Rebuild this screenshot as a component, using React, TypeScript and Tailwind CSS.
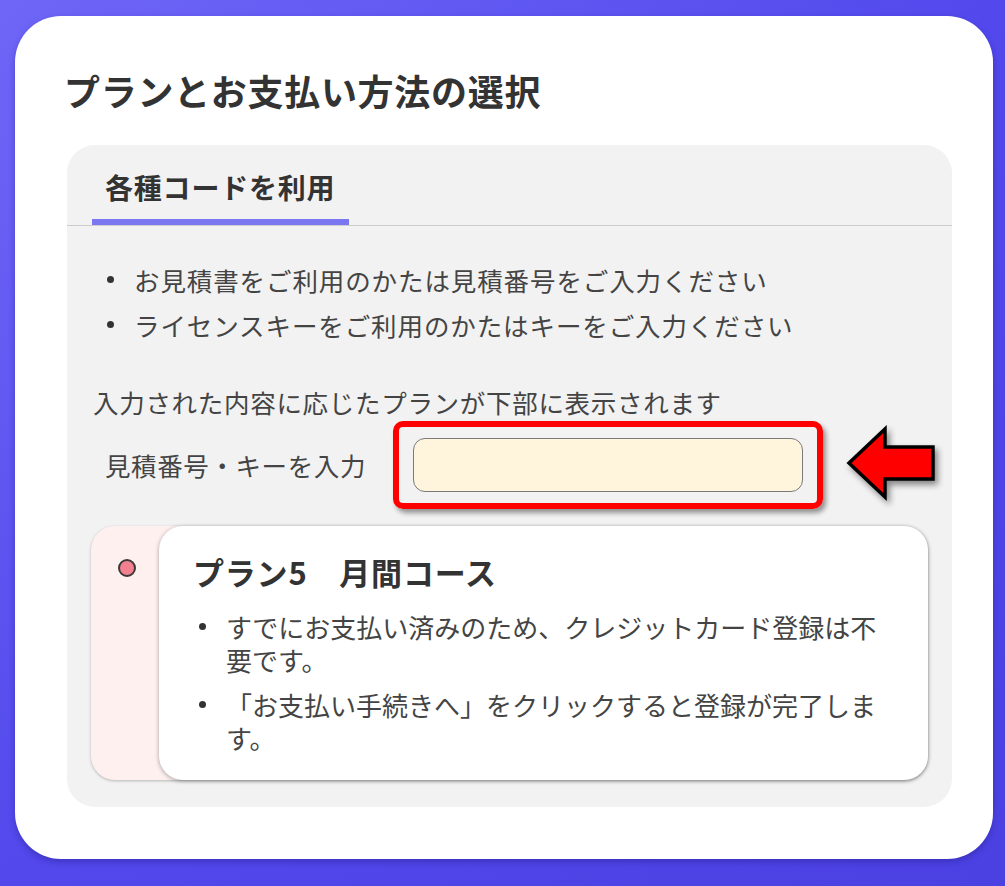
import React from 'react';

const Dot: React.FC<{ className?: string }> = ({ className }) => (
  <span className={`block w-[7px] h-[7px] rounded-full bg-[#333] shrink-0 ${className ?? ''}`} />
);

const LeftArrow: React.FC = () => (
  <svg width="96" height="80" viewBox="0 0 96 80" className="shrink-0 drop-shadow-[3px_4px_3px_rgba(0,0,0,0.45)]">
    <polygon
      points="4,38 40,4 40,22 88,22 88,54 40,54 40,72"
      fill="#ff0000"
      stroke="#000"
      strokeWidth="3.5"
      strokeLinejoin="miter"
    />
  </svg>
);

const App: React.FC = () => {
  const notes = [
    'お見積書をご利用のかたは見積番号をご入力ください',
    'ライセンスキーをご利用のかたはキーをご入力ください',
  ];
  const planNotes = [
    'すでにお支払い済みのため、クレジットカード登録は不要です。',
    '「お支払い手続きへ」をクリックすると登録が完了します。',
  ];

  return (
    <div className="w-[1005px] h-[886px] pt-[16px] pl-[15px] pr-[12px] pb-[26px] bg-gradient-to-br from-[#6f66f7] via-[#5248ec] to-[#4b41e2] font-['Noto_Sans_CJK_JP','Noto_Sans',sans-serif]">
      <div className="h-[843px] bg-white rounded-[46px] shadow-[0_3px_6px_rgba(30,20,120,0.35)] pt-[50px] pl-[52px] pr-[41px]">
        {/* Title */}
        <h1 className="text-[36px] leading-[48px] font-bold text-[#333] -ml-[3px] tracking-[0.7px]">
          プランとお支払い方法の選択
        </h1>

        {/* Panel */}
        <div className="mt-[31px] h-[662px] bg-[#f2f2f2] rounded-[28px] overflow-hidden">
          {/* Tabs */}
          <div className="h-[81px] flex items-end px-[25px] border-b border-[#cdcdcd]">
            <div className="pt-[18px] pl-[13px] pr-[14px] pb-[11px] border-b-[6px] border-[#7a77f0]">
              <span className="block text-[28px] leading-[42px] font-bold text-[#333] tracking-[0.8px]">各種コードを利用</span>
            </div>
          </div>

          <div className="pt-[31px]">
            <ul className="pl-[40px]">
              {notes.map((n) => (
                <li key={n} className="flex items-center h-[45px]">
                  <Dot />
                  <span className="ml-[20px] text-[25.5px] leading-[45px] text-[#444] tracking-[0.9px]">{n}</span>
                </li>
              ))}
            </ul>

            <p className="mt-[35px] pl-[26px] text-[25.5px] leading-[40px] text-[#444] tracking-[0.7px]">
              入力された内容に応じたプランが下部に表示されます
            </p>

            {/* Input row */}
            <div className="flex items-center h-[88px] -mt-[1px]">
              <span className="pl-[38px] w-[326px] text-[25.5px] leading-[40px] text-[#444] tracking-[0.6px]">見積番号・キーを入力</span>
              <div className="w-[430px] h-[88px] border-[6px] border-[#ff0000] rounded-[10px] flex items-center justify-center shadow-[3px_4px_5px_rgba(0,0,0,0.4)]">
                <input
                  type="text"
                  className="w-[390px] h-[54px] bg-[#fff5dc] border-[1.5px] border-[#7a7a7a] rounded-[12px] outline-none"
                />
              </div>
              <div className="ml-[22px]">
                <LeftArrow />
              </div>
            </div>

            {/* Plan card */}
            <div className="mt-[17px] mx-[24px] flex bg-[#fff0f0] rounded-[24px] shadow-[0_1px_3px_rgba(0,0,0,0.25)]">
              <div className="w-[68px] pl-[27px] pt-[33px]">
                <span className="block w-[18px] h-[18px] rounded-full bg-[#f2808f] border-[2px] border-[#3a3a3a]" />
              </div>
              <div className="flex-1 bg-white rounded-[24px] shadow-[0_1px_4px_rgba(0,0,0,0.35)] pt-[25px] pl-[34px] pr-[35px] pb-[26px]">
                <h2 className="text-[31px] leading-[42px] font-bold text-[#333] tracking-[0.8px]">プラン5　月間コース</h2>
                <ul className="mt-[17px] flex flex-col gap-[12px]">
                  {planNotes.map((n) => (
                    <li key={n} className="flex items-start">
                      <Dot className="mt-[13px] ml-[6px]" />
                      <span className="ml-[20px] w-[665px] text-[26px] leading-[33px] text-[#444]">{n}</span>
                    </li>
                  ))}
                </ul>
              </div>
            </div>
          </div>
        </div>
      </div>
    </div>
  );
};

export default App;
